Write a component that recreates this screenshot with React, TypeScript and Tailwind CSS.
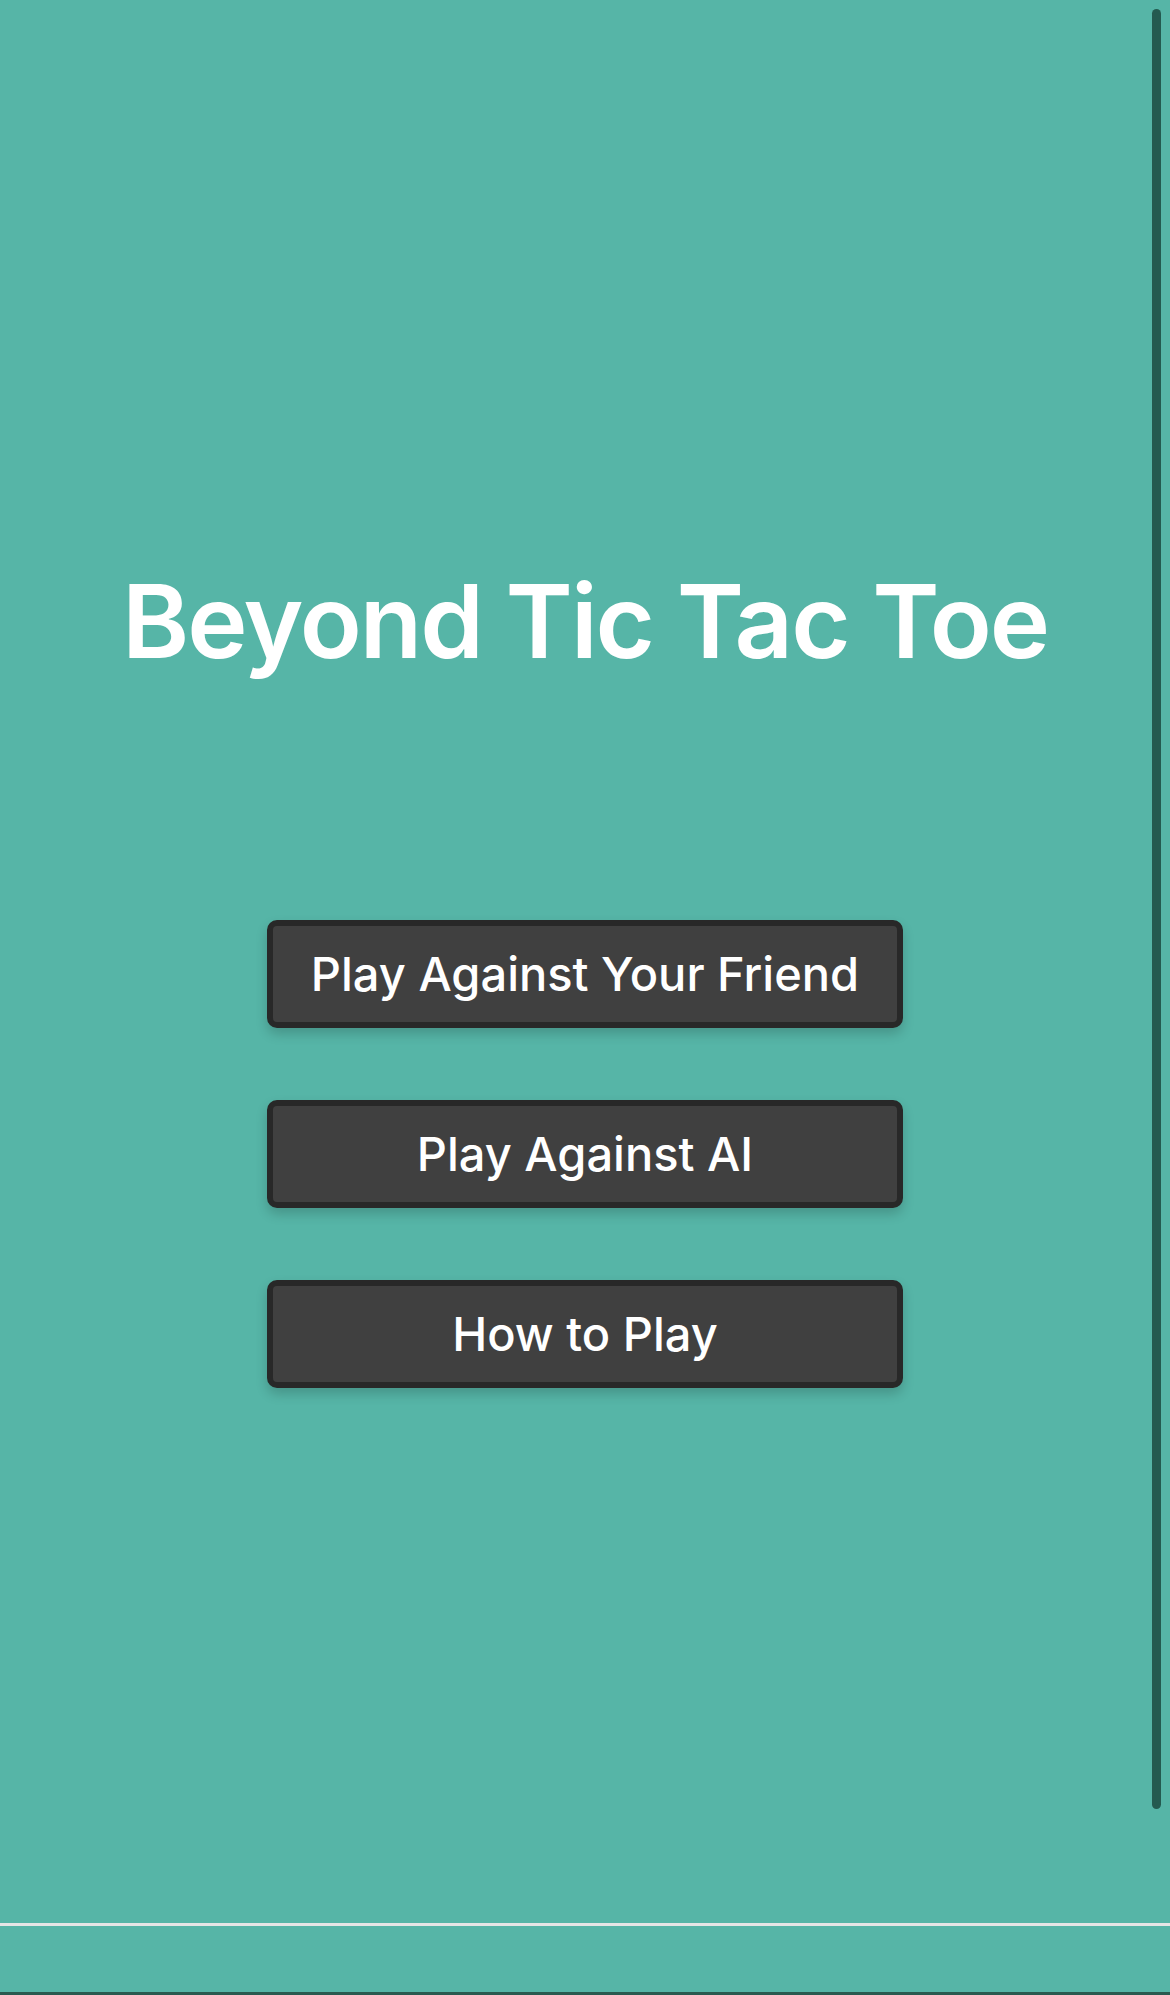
const buttons = ["Play Against Your Friend", "Play Against AI", "How to Play"];

export default function App() {
  return (
    <div
      className="relative flex h-[1995px] w-full flex-col overflow-hidden bg-[#56b5a7]"
      style={{ fontFamily: "Inter, 'Noto Sans', sans-serif" }}
    >
      {/* scroll indicator */}
      <div className="absolute right-[9px] top-[9px] h-[1800px] w-[9px] rounded-full bg-[#245a50]" />

      <main className="flex flex-1 flex-col items-center">
        <h1 className="mt-[570px] text-[102px] font-semibold leading-none tracking-[-2px] text-white">
          Beyond Tic Tac Toe
        </h1>

        <div className="mt-[248px] flex flex-col items-center gap-[72px]">
          {buttons.map((label) => (
            <button
              key={label}
              className="flex h-[108px] w-[636px] items-center justify-center rounded-[10px] border-[6px] border-[#282828] bg-[#404040] text-[47px] font-medium text-white shadow-[0_6px_12px_rgba(0,0,0,0.18)]"
            >
              {label}
            </button>
          ))}
        </div>
      </main>

      <footer className="flex h-[72px] flex-col">
        <div className="h-[3px] bg-[#e6e6e6]" />
        <div className="flex-1" />
        <div className="h-[3px] bg-[#2a5a50]" />
      </footer>
    </div>
  );
}
